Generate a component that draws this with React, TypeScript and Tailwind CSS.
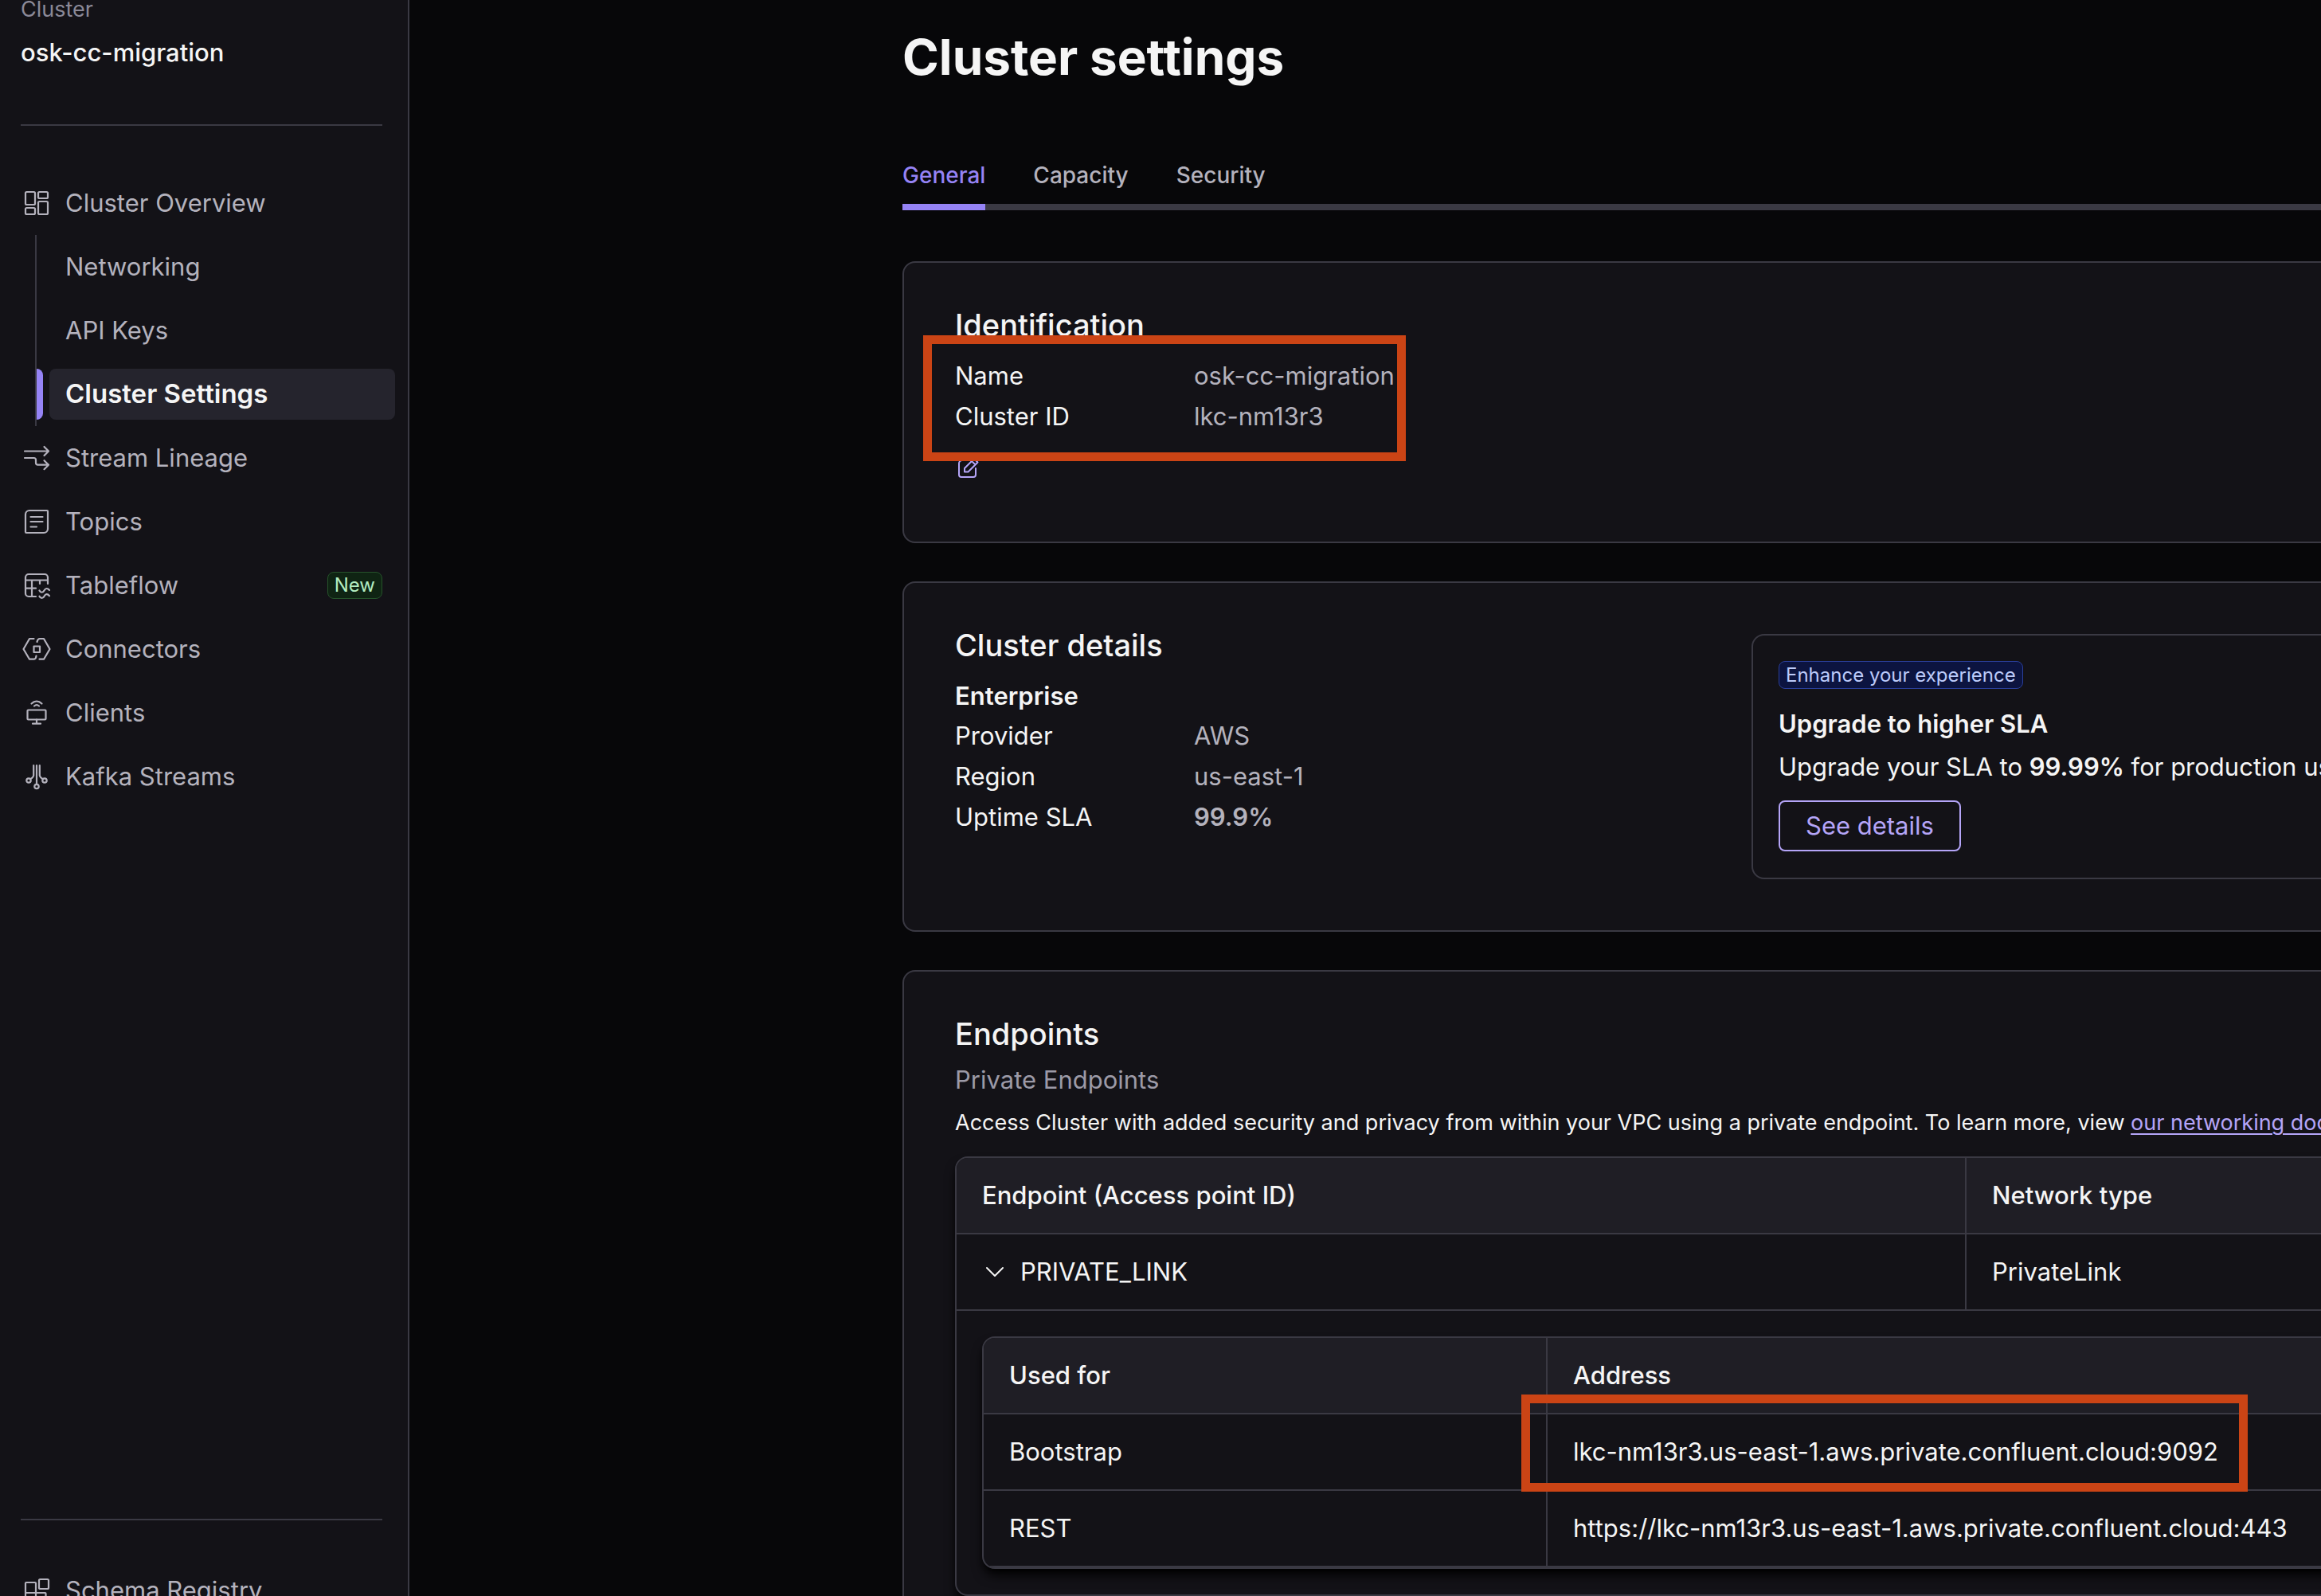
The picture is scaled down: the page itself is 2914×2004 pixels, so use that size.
import React from 'react';

type IconProps = { children: React.ReactNode };

function Icon({ children }: IconProps) {
  return (
    <svg viewBox="0 0 40 40" fill="none" stroke="currentColor" strokeWidth="2.2" strokeLinecap="round" strokeLinejoin="round" className="size-10" aria-hidden="true">
      {children}
    </svg>
  );
}

const OverviewIcon = () => (
  <Icon>
    <rect x="6" y="6" width="12" height="16" rx="1.5" />
    <rect x="22" y="6" width="12" height="8" rx="1.5" />
    <rect x="6" y="26" width="12" height="8" rx="1.5" />
    <rect x="22" y="18" width="12" height="16" rx="1.5" />
  </Icon>
);

const LineageIcon = () => (
  <Icon>
    <path d="M5 11.500H35M29.500 6l5.500 5.500-5.500 5.500M5 20h11.500c2 0 2.500.5 2.500 2.500v3.500c0 2 .5 2.700 2.500 2.700H35M29.500 23.200l5.500 5.500-5.500 5.500" />
  </Icon>
);

const TopicsIcon = () => (
  <Icon>
    <path d="M11 6h22a1 1 0 0 1 1 1v22a5 5 0 0 1-5 5H7a1 1 0 0 1-1-1V11a5 5 0 0 1 5-5ZM12.500 14h15M12.500 20h15M12.500 26.500h7.500" />
  </Icon>
);

const TableflowIcon = () => (
  <Icon>
    <path d="M34 18V10a4 4 0 0 0-4-4H10a4 4 0 0 0-4 4v20a4 4 0 0 0 4 4h9M6 13.500h28M6 23.700h13M14 13.500V34M24 13.500V18" />
    <path d="M23.500 26.500c1.500 3 4.500 3 6 0s4-3.500 6.500-.5M23.500 33.700c1.500 3 4.500 3 6 0s4-3.500 6.500-.5" />
  </Icon>
);

const ConnectorsIcon = () => (
  <Icon>
    <path d="M16.500 7h-5.500L3.500 20l7.500 12.700h6c1.200 0 2-.8 2.500-4M23.500 32.700h5.500L36.500 20 29 7h-5c-2 0-3 1.500-3.500 4" />
    <rect x="16.5" y="16.5" width="7.5" height="7.5" />
  </Icon>
);

const ClientsIcon = () => (
  <Icon>
    <rect x="8.500" y="16.500" width="23" height="12" rx="1" />
    <path d="M20 28.500v5M15 33.700h10M13.500 8.500c4-4 9-4 13 0M17 11.500c2-1.700 4-1.700 6 0" />
  </Icon>
);

const StreamsIcon = () => (
  <Icon>
    <path d="M20 6v23.500M16.200 6v12.500c0 1.500-1 2.700-4 4.700M23.800 6v12.500c0 1.500 1 2.700 4 4.700" />
    <circle cx="20" cy="32.500" r="2.700" />
    <circle cx="10" cy="25" r="2.700" />
    <circle cx="30" cy="25" r="2.700" />
  </Icon>
);

const SchemaIcon = () => (
  <Icon>
    <path d="M6 36V11a1 1 0 0 1 1-1h11a1 1 0 0 1 1 1v25M6 23h24.500a1 1 0 0 1 1 1v12H6" />
    <rect x="23" y="6" width="12" height="12" rx="1.500" />
  </Icon>
);

function NavItem({ icon, label, badge }: { icon: React.ReactNode; label: string; badge?: string }) {
  return (
    <li>
      <a href="#" className="flex h-20 items-center gap-4 pr-8 pl-[26px]">
        {icon}
        <span>{label}</span>
        {badge && (
          <span className="ml-auto rounded-lg border border-[#26532b] bg-[#0f2413] px-2 text-2xl leading-[32px] text-[#b4ecc0]">{badge}</span>
        )}
      </a>
    </li>
  );
}

function Sidebar() {
  return (
    <aside className="flex h-screen w-[514px] shrink-0 flex-col overflow-hidden border-r-2 border-[#3a3943] bg-[#131217] text-[#b4b2bd]">
      <div className="mr-8 ml-[26px] h-[158px] shrink-0 border-b-2 border-[#3a3943]">
        <p className="-mt-2 text-[27px] leading-[40px] text-[#8b8997]">Cluster</p>
        <p className="mt-3.5 leading-10 font-medium text-[#f5f5f5]">osk-cc-migration</p>
      </div>
      <nav className="mt-[57px]" aria-label="Cluster">
        <ul>
          <NavItem icon={<OverviewIcon />} label="Cluster Overview" />
        </ul>
        <ul className="ml-11 border-l-2 border-[#3a3943]">
          <li><a href="#" className="flex h-20 items-center pl-9">Networking</a></li>
          <li><a href="#" className="flex h-20 items-center pl-9">API Keys</a></li>
          <li className="flex h-20 items-center gap-2 pr-4">
            <span className="h-16 w-2 rounded-r-lg bg-[#9583f5]" />
            <a href="#" aria-current="page" className="flex h-16 grow items-center rounded-lg bg-[#25242d] pl-5 text-[33px] font-semibold text-[#f5f5f5]">Cluster Settings</a>
          </li>
        </ul>
        <ul>
          <NavItem icon={<LineageIcon />} label="Stream Lineage" />
          <NavItem icon={<TopicsIcon />} label="Topics" />
          <NavItem icon={<TableflowIcon />} label="Tableflow" badge="New" />
          <NavItem icon={<ConnectorsIcon />} label="Connectors" />
          <NavItem icon={<ClientsIcon />} label="Clients" />
          <NavItem icon={<StreamsIcon />} label="Kafka Streams" />
        </ul>
      </nav>
      <div className="mt-auto h-[97px] shrink-0">
        <div className="mr-8 ml-[26px] border-t-2 border-[#3a3943]" />
        <ul className="mt-12">
          <NavItem icon={<SchemaIcon />} label="Schema Registry" />
        </ul>
      </div>
    </aside>
  );
}

function Row({ label, value, strong }: { label: string; value: string; strong?: boolean }) {
  return (
    <div className="flex h-[51px] items-center">
      <dt className="w-[300px]">{label}</dt>
      <dd className={strong ? 'font-semibold text-[#b4b2bd]' : 'text-[#b4b2bd]'}>{value}</dd>
    </div>
  );
}

const card = 'rounded-2xl border-2 border-[#3a3943] bg-[#131217] px-16';
const heading = 'text-[38px] leading-[48px] font-medium';
const cell = 'h-24 border-r-2 border-b-2 border-[#3a3943] px-8 text-left';

function Identification() {
  return (
    <section className={card + ' pt-[54px] pb-[92px]'}>
      <h2 className={heading}>Identification</h2>
      <div className="relative">
        <dl className="pt-[15px]">
          <Row label="Name" value="osk-cc-migration" />
          <Row label="Cluster ID" value="lkc-nm13r3" />
        </dl>
        <button type="button" aria-label="Edit identification" className="mt-[23px] -mb-4 block text-[#b5a5f8]">
          <svg viewBox="0 0 32 32" fill="none" stroke="currentColor" strokeWidth="2" strokeLinecap="round" strokeLinejoin="round" className="size-8" aria-hidden="true">
            <path d="M16 6H9a4 4 0 0 0-4 4v14a3 3 0 0 0 3 3h15a3 3 0 0 0 3-3v-8M12 20.500v-4.500L24 4l4.500 4.500-12 12ZM21 7l4.500 4.500" />
          </svg>
        </button>
        <div className="absolute -top-[11px] -left-[40px] h-[158px] w-[606px] border-[11px] border-[#cb4415]" />
      </div>
    </section>
  );
}

function ClusterDetails() {
  return (
    <section className={card + ' flex py-16'}>
      <div className="-mt-2.5 w-[1000px] shrink-0">
        <h2 className={heading}>Cluster details</h2>
        <h3 className="mt-3.5 leading-[51px] font-semibold">Enterprise</h3>
        <dl>
          <Row label="Provider" value="AWS" />
          <Row label="Region" value="us-east-1" />
          <Row label="Uptime SLA" value="99.9%" strong />
        </dl>
      </div>
      <div className="flex h-[308px] w-[1000px] shrink-0 flex-col items-start rounded-2xl border-2 border-[#3a3943] px-8 pt-8">
        <span className="rounded-lg border border-[#2a3f9a] bg-[#0c1440] px-2 text-2xl leading-[33px] text-[#bccbfa]">Enhance your experience</span>
        <h3 className="mt-5 leading-[48px] font-semibold">Upgrade to higher SLA</h3>
        <p className="mt-1.5 leading-[48px] whitespace-nowrap">Upgrade your SLA to <b className="font-semibold">99.99%</b> for production usage</p>
        <button type="button" className="mt-[18px] h-16 rounded-lg border-2 border-[#b5a5f8] px-8 text-[#b5a5f8]">See details</button>
      </div>
    </section>
  );
}

function Endpoints() {
  return (
    <section className={card + ' pt-[54px] pb-16'}>
      <h2 className={heading}>Endpoints</h2>
      <h3 className="mt-2.5 leading-[48px] text-[#9c9aa7]">Private Endpoints</h3>
      <p className="mt-1.5 mb-[18px] text-[27px] leading-[48px] whitespace-nowrap">
        Access Cluster with added security and privacy from within your VPC using a private endpoint. To learn more, view{' '}
        <a href="#" className="text-[#b5a5f8] underline decoration-2 underline-offset-4">our networking docs</a>
      </p>
      <div className="overflow-hidden rounded-2xl border-2 border-[#3a3943] shadow-lg shadow-black">
        <table className="w-full table-fixed border-separate border-spacing-0">
          <thead className="bg-[#1f1e25]">
            <tr>
              <th className={cell + ' w-[1268px] font-medium'}>Endpoint (Access point ID)</th>
              <th className={cell + ' font-medium'}>Network type</th>
            </tr>
          </thead>
          <tbody>
            <tr>
              <td className={cell}>
                <button type="button" aria-expanded="true" className="flex items-center gap-4">
                  <svg viewBox="0 0 32 32" fill="none" stroke="currentColor" strokeWidth="2" strokeLinecap="round" strokeLinejoin="round" className="size-8" aria-hidden="true"><path d="m6 11 10 10 10-10" /></svg>
                  PRIVATE_LINK
                </button>
              </td>
              <td className={cell}>PrivateLink</td>
            </tr>
            <tr>
              <td colSpan={2} className="p-8">
                <div className="relative">
                  <div className="overflow-hidden rounded-2xl border-2 border-[#3a3943] shadow-lg shadow-black">
                    <table className="w-full table-fixed border-separate border-spacing-0">
                      <thead className="bg-[#1f1e25]">
                        <tr>
                          <th className={cell + ' w-[708px] font-medium'}>Used for</th>
                          <th className={cell + ' font-medium'}>Address</th>
                        </tr>
                      </thead>
                      <tbody>
                        <tr>
                          <td className={cell}>Bootstrap</td>
                          <td className={cell}>lkc-nm13r3.us-east-1.aws.private.confluent.cloud:9092</td>
                        </tr>
                        <tr>
                          <td className={cell}>REST</td>
                          <td className={cell}>https://lkc-nm13r3.us-east-1.aws.private.confluent.cloud:443</td>
                        </tr>
                      </tbody>
                    </table>
                  </div>
                  <div className="absolute top-[73px] left-[677px] h-[122px] w-[912px] border-[11px] border-[#cb4415]" />
                </div>
              </td>
            </tr>
          </tbody>
        </table>
      </div>
    </section>
  );
}

export default function App() {
  return (
    <div className="flex h-screen overflow-hidden bg-[#070709] font-['Inter',sans-serif] text-[31px] text-[#f5f5f5]">
      <Sidebar />
      <main className="min-w-0 grow overflow-hidden pl-[619px]">
        <div className="flex min-w-[2200px] flex-col">
          <h1 className="mt-8 text-[62px] leading-[80px] font-bold">Cluster settings</h1>
          <div role="tablist" className="mt-[76px] flex gap-[60px] border-b-8 border-[#3a3943] text-[28px] leading-16 font-medium text-[#b4b2bd]">
            <button type="button" role="tab" aria-selected="true" className="-mb-2 border-b-8 border-[#9583f5] pb-1 text-[#9583f5]">General</button>
            <button type="button" role="tab" aria-selected="false" className="pb-1">Capacity</button>
            <button type="button" role="tab" aria-selected="false" className="pb-1">Security</button>
          </div>
          <div className="mt-16 flex flex-col gap-12">
            <Identification />
            <ClusterDetails />
            <Endpoints />
          </div>
        </div>
      </main>
    </div>
  );
}
